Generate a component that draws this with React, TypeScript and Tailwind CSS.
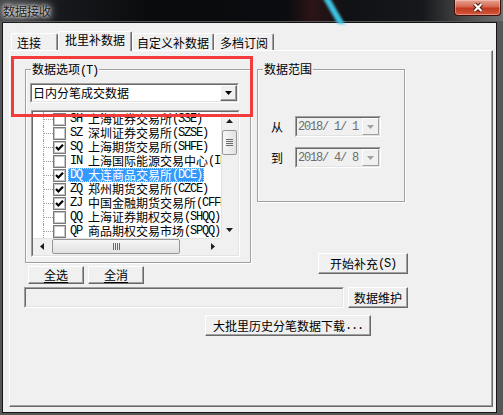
import React from "react";

type Row = { code: string; name: string; on: boolean; sel?: boolean };

const rows: Row[] = [
  { code: "SH", name: "上海证券交易所(SSE)", on: false },
  { code: "SZ", name: "深圳证券交易所(SZSE)", on: false },
  { code: "SQ", name: "上海期货交易所(SHFE)", on: true },
  { code: "IN", name: "上海国际能源交易中心(INE)", on: false },
  { code: "DQ", name: "大连商品交易所(DCE)", on: true, sel: true },
  { code: "ZQ", name: "郑州期货交易所(CZCE)", on: true },
  { code: "ZJ", name: "中国金融期货交易所(CFFEX)", on: true },
  { code: "QQ", name: "上海证券期权交易(SHQQ)", on: false },
  { code: "QP", name: "商品期权交易市场(SPQQ)", on: false },
  { code: "QS", name: "股票期权交易市场(SOPT)", on: false },
];

// ASCII runs get a 6px-wide mono face, like SimSun's half-width glyphs
function Txt({ s }: { s: string }) {
  const parts = s.match(/[\x20-\x7e]+|[^\x20-\x7e]+/g) ?? [];
  return (
    <>
      {parts.map((p, i) =>
        /^[\x20-\x7e]/.test(p) ? (
          <span key={i} className="whitespace-pre font-['Liberation_Mono',monospace] text-[12px] tracking-[-1.2px]">
            {p}
          </span>
        ) : (
          <span key={i}>{p}</span>
        )
      )}
    </>
  );
}

function Sunken({ className = "", inner = "", children }: { className?: string; inner?: string; children?: React.ReactNode }) {
  return (
    <div className={`border border-t-[#a0a0a0] border-l-[#a0a0a0] border-b-white border-r-white ${className}`}>
      <div className={`h-full w-full border border-t-[#696969] border-l-[#696969] border-b-[#e3e3e3] border-r-[#e3e3e3] ${inner}`}>
        {children}
      </div>
    </div>
  );
}

function Btn({ label, className = "", underline = false }: { label: string; className?: string; underline?: boolean }) {
  return (
    <div
      className={`flex items-center justify-center border border-t-white border-l-white border-b-[#696969] border-r-[#696969] bg-[#f0f0f0] text-black shadow-[inset_-1px_-1px_0_#a0a0a0] ${underline ? "underline underline-offset-2" : ""} ${className}`}
    >
      <Txt s={label} />
    </div>
  );
}

function Arrow({ dir, color = "#1e1e1e" }: { dir: "up" | "down" | "left" | "right"; color?: string }) {
  if (dir === "up" || dir === "down") {
    return (
      <svg width="7" height="4" viewBox="0 0 7 4">
        <path d={dir === "down" ? "M0 0h7L3.5 4z" : "M0 4h7L3.5 0z"} fill={color} />
      </svg>
    );
  }
  return (
    <svg width="4" height="7" viewBox="0 0 4 7">
      <path d={dir === "right" ? "M0 0v7L4 3.5z" : "M4 0v7L0 3.5z"} fill={color} />
    </svg>
  );
}

function Check({ on }: { on: boolean }) {
  return (
    <div className="h-[13px] w-[13px] border border-[#7a7a7a] bg-white shadow-[inset_0_0_0_1px_#c4c4c4]">
      {on && (
        <svg width="11" height="11" viewBox="0 0 11 11">
          <path d="M2 5 L4.4 7.5 L9 2.8" fill="none" stroke="#000" strokeWidth="2.2" />
        </svg>
      )}
    </div>
  );
}

function Group({ label, className = "", children }: { label: string; className?: string; children?: React.ReactNode }) {
  return (
    <div className={`mt-[7px] border border-[#a0a0a0] shadow-[inset_1px_1px_0_#fff,1px_1px_0_#fff] ${className}`}>
      <div className="-mt-[8px] ml-[5px] w-fit bg-[#f0f0f0] px-[1px] leading-[14px]">
        <Txt s={label} />
      </div>
      {children}
    </div>
  );
}

function DateField({ lead, value }: { lead: string; value: string }) {
  return (
    <div className="flex items-center pl-[13px]">
      <span>{lead}</span>
      <Sunken className="ml-[12px] h-[21px] w-[86px]" inner="flex bg-[#f0f0f0]">
        <div className="flex flex-1 items-center pl-[1px] text-[#6d6d6d]">
          <Txt s={value} />
        </div>
        <div className="flex w-[17px] items-center justify-center border border-t-white border-l-white border-b-[#a0a0a0] border-r-[#a0a0a0] bg-[#f0f0f0]">
          <Arrow dir="down" color="#a0a0a0" />
        </div>
      </Sunken>
    </div>
  );
}

function Tab({ label, w, pl, active = false }: { label: string; w: string; pl: string; active?: boolean }) {
  return (
    <div
      className={`rounded-t-[2px] border-l border-t border-r border-l-white border-t-white border-r-[#696969] bg-[#f0f0f0] shadow-[inset_-1px_0_0_#a0a0a0] ${w} ${pl} ${
        active ? "relative z-10 -mb-px h-[20px] pt-[1px]" : "h-[17px] pt-[2px]"
      }`}
    >
      {label}
    </div>
  );
}

function TreeList() {
  return (
    <Sunken className="ml-[5px] mt-[7px] h-[147px] w-[209px]" inner="grid grid-cols-[1fr_17px] grid-rows-[1fr_17px] bg-white">
      <div className="overflow-hidden">
        {rows.map((r) => (
          <div key={r.code} className="flex h-[14px] items-stretch whitespace-nowrap">
            <div className="ml-[10px] flex w-[10px] shrink-0 items-center border-l border-dotted border-[#a0a0a0]">
              <div className="w-[9px] border-t border-dotted border-[#a0a0a0]" />
            </div>
            <div className="flex shrink-0 items-center">
              <Check on={r.on} />
            </div>
            <div
              className={`ml-[2px] flex shrink-0 items-center px-[2px] ${
                r.sel ? "bg-[#3399ff] text-white outline-1 -outline-offset-1 outline-dotted outline-[#bcdcff]" : "text-black"
              }`}
            >
              <Txt s={`${r.code} ${r.name}`} />
            </div>
          </div>
        ))}
      </div>

      {/* vertical scrollbar */}
      <div className="flex flex-col bg-[#f0f0f0] shadow-[inset_1px_0_0_#e3e3e3]">
        <div className="flex h-[17px] items-center justify-center">
          <Arrow dir="up" />
        </div>
        <div className="flex-1 px-[1px]">
          <div className="mt-px flex h-[25px] flex-col items-center justify-center gap-[1px] rounded-[2px] border border-[#979797] bg-[linear-gradient(to_right,#f6f6f6,#e2e2e2)]">
            <div className="h-px w-[7px] bg-[#6b6b6b]" />
            <div className="h-px w-[7px] bg-[#6b6b6b]" />
            <div className="h-px w-[7px] bg-[#6b6b6b]" />
            <div className="h-px w-[7px] bg-[#6b6b6b]" />
          </div>
        </div>
        <div className="flex h-[17px] items-center justify-center">
          <Arrow dir="down" />
        </div>
      </div>

      {/* horizontal scrollbar */}
      <div className="flex bg-[#f0f0f0] shadow-[inset_0_1px_0_#e3e3e3]">
        <div className="flex w-[17px] items-center justify-center">
          <Arrow dir="left" />
        </div>
        <div className="flex flex-1 items-center py-[1px]">
          <div className="ml-[2px] flex h-[15px] w-[128px] items-center justify-center gap-[1px] rounded-[2px] border border-[#979797] bg-[linear-gradient(to_bottom,#f6f6f6,#e2e2e2)]">
            <div className="h-[7px] w-px bg-[#6b6b6b]" />
            <div className="h-[7px] w-px bg-[#6b6b6b]" />
            <div className="h-[7px] w-px bg-[#6b6b6b]" />
            <div className="h-[7px] w-px bg-[#6b6b6b]" />
          </div>
        </div>
        <div className="flex w-[17px] items-center justify-center">
          <Arrow dir="right" />
        </div>
      </div>
      <div className="bg-[#f0f0f0]" />
    </Sunken>
  );
}

export default function App() {
  return (
    <div className="flex h-[415px] w-[503px] flex-col overflow-hidden bg-[#0c0d10] font-['Noto_Sans_CJK_SC','Noto_Sans',sans-serif] text-[12px] leading-[14px] text-black">
      {/* title bar */}
      <div className="relative flex h-[21px] shrink-0 bg-[linear-gradient(to_right,#45474b_0%,#17191c_12%,#0a0b0d_30%,#0b0c0f_57%,#2c1416_62%,#0f1114_69%,#16181b_84%,#4d4d4d_93%,#717171_100%)]">
        <div className="absolute left-[330px] top-[-3px] h-[27px] w-[7px] skew-x-[30deg] bg-[#3cc3e2] blur-[1.5px]" />
        <div className="relative pl-[3px] pt-[4px] text-[#1a1a1a] [text-shadow:0_0_3px_#fff,0_0_6px_#e8e8e8,0_0_10px_#c8c8c8]">
          数据接收
        </div>
        <div className="relative ml-auto mr-[2px] flex h-[16px] w-[47px] items-center justify-center rounded-b-[4px] border border-t-0 border-[#3d0f08] bg-[linear-gradient(to_bottom,#e6a494_0%,#d5664e_45%,#c03a20_55%,#d3583c_100%)] shadow-[inset_0_0_0_1px_rgba(255,210,200,0.45)]">
          <svg width="14" height="11" viewBox="0 0 14 11">
            <path d="M3.5 2 L10.5 9 M10.5 2 L3.5 9" stroke="#4a1308" strokeWidth="4" />
            <path d="M3.5 2 L10.5 9 M10.5 2 L3.5 9" stroke="#fff" strokeWidth="2.2" />
          </svg>
        </div>
      </div>

      {/* frame + client */}
      <div className="flex flex-1 bg-[#575757] pb-[2px] pl-[2px] pr-[6px] pt-px">
        <div className="flex flex-1 flex-col border border-[#151515] bg-[#f0f0f0] pb-[5px] pl-[6px] pr-[3px] pt-[8px]">
          <div className="flex h-[19px] shrink-0 items-end pl-[2px]">
            <Tab label="连接" w="w-[47px]" pl="pl-[5px]" />
            <Tab label="批里补数据" w="w-[74px]" pl="pl-[6px]" active />
            <Tab label="自定义补数据" w="w-[82px]" pl="pl-[4px]" />
            <Tab label="多档订阅" w="w-[60px]" pl="pl-[5px]" />
          </div>

          <div className="relative flex-1 border border-t-white border-l-white border-b-[#696969] border-r-[#696969] pl-[15px] pt-[11px] shadow-[inset_-1px_-1px_0_#a0a0a0]">
            <div className="flex gap-[6px]">
              <div className="flex w-[226px] flex-col">
                <Group label="数据选项(T)" className="pb-[5px]">
                  <Sunken className="ml-[4px] mt-[5px] h-[20px] w-[209px]" inner="flex bg-white">
                    <div className="flex flex-1 items-center pl-[1px]">日内分笔成交数据</div>
                    <div className="flex w-[17px] items-center justify-center border border-t-white border-l-white border-b-[#696969] border-r-[#696969] bg-[#f0f0f0] shadow-[inset_-1px_-1px_0_#a0a0a0]">
                      <Arrow dir="down" color="#000" />
                    </div>
                  </Sunken>
                  <TreeList />
                </Group>
                <div className="ml-[3px] mt-[3px] flex gap-[4px]">
                  <Btn label="全选" underline className="h-[18px] w-[56px]" />
                  <Btn label="全消" underline className="h-[18px] w-[56px]" />
                </div>
              </div>

              <div className="flex w-[151px] flex-col">
                <Group label="数据范围" className="w-[148px] pb-[33px]">
                  <div className="mt-[40px]">
                    <DateField lead="从" value="2018/ 1/ 1" />
                  </div>
                  <div className="mt-[10px]">
                    <DateField lead="到" value="2018/ 4/ 8" />
                  </div>
                </Group>
                <Btn label="开始补充(S)" className="mt-[51px] h-[21px] w-[90px] self-end" />
              </div>
            </div>

            <div className="-ml-px mt-[3px] flex gap-[4px]">
              <Sunken className="h-[21px] w-[320px]" inner="bg-[#f0f0f0]" />
              <Btn label="数据维护" className="h-[21px] w-[60px]" />
            </div>

            <div className="ml-[180px] mt-[7px]">
              <Btn label="大批里历史分笔数据下载..." className="h-[21px] w-[166px]" />
            </div>

            {/* red annotation box */}
            <div className="absolute left-[1px] top-[5px] h-[61px] w-[242px] border-[3px] border-[#f33b3b]" />
          </div>
        </div>
      </div>
    </div>
  );
}
